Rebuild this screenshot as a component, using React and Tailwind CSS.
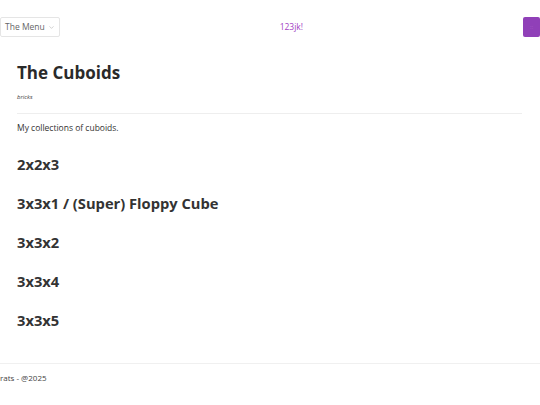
import { ChevronDown } from 'lucide-react';

const cuboids = ['2x2x3', '3x3x1 / (Super) Floppy Cube', '3x3x2', '3x3x4', '3x3x5'];

export default function App() {
    return (
        <div className="min-h-[405px] bg-white text-[#333] flex flex-col" style={{ fontFamily: '"Open Sans", "Noto Sans", sans-serif' }}>
            <nav className="flex items-center justify-between h-[20px] mt-[17px]">
                <button className="h-[20px] px-[4px] flex items-center gap-[3px] border border-[#e5e5e5] rounded-[2px] text-[8.5px] text-[#666]">
                    The Menu
                    <ChevronDown size={7} strokeWidth={1.5} className="text-[#999]" />
                </button>
                <span className="text-[8.5px] text-[#a43fc4]">123jk!</span>
                <div className="w-[17px] h-[20px] rounded-[2px] bg-[#9040b8] flex items-center justify-center">
                    <span className="text-[6px] text-[#a45ac6]">::</span>
                </div>
            </nav>

            <main className="px-[17px] pt-[24px] flex-1">
                <h1 className="text-[17px] font-bold leading-[24px] text-[#2a2a2a]">The Cuboids</h1>
                <p className="text-[6px] italic text-[#444] mt-[8px]">bricks</p>
                <hr className="border-[#eee] mt-[11px] mr-[1px]" />
                <p className="text-[8.5px] mt-[8px]">My collections of cuboids.</p>
                <div className="flex flex-col gap-[19px] mt-[19px]">
                    {cuboids.map(c => (
                        <h2 key={c} className="text-[14.7px] font-bold leading-[20px] text-[#333]">{c}</h2>
                    ))}
                </div>
            </main>

            <footer className="border-t border-[#f0f0f0] mt-[19px] pt-[8px] pb-[21px] text-[8px] text-[#444]">
                rats - @2025
            </footer>
        </div>
    );
}
